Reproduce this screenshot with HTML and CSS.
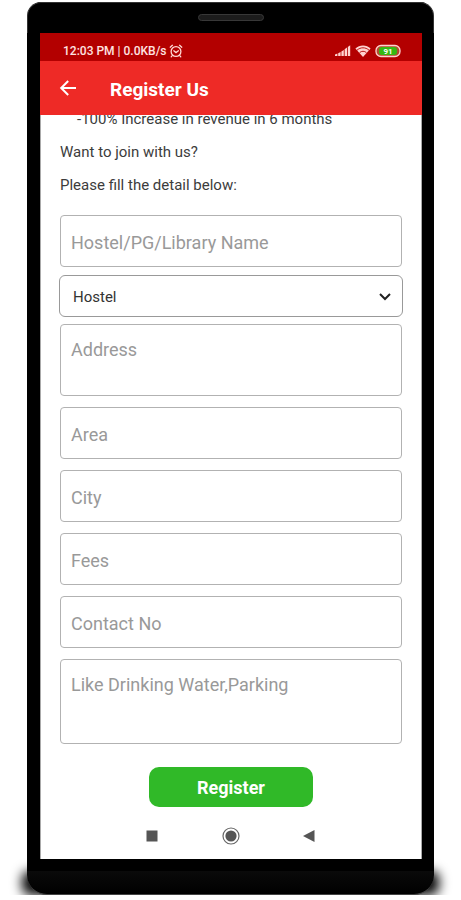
FILE: index.html
```html
<!DOCTYPE html>
<html lang="en">
<head>
  <meta charset="utf-8">
  <meta name="viewport" content="width=device-width, initial-scale=1">
  <title>Register Us</title>
  <link rel="stylesheet" href="styles.css">
</head>
<body>
  <div class="phone">
    <div class="bezel-top"><span class="speaker"></span></div>
    <div class="screen">
      <div class="status-bar">
        <span class="status-text">12:03 PM | 0.0KB/s</span>
        <svg class="alarm" width="14" height="14" viewBox="0 0 14 14" fill="none" stroke="#ffd9d4" stroke-width="1.3" stroke-linecap="round">
          <circle cx="7" cy="7.5" r="4.9"/>
          <path d="M1.2 3.2 3.4 1.3M12.8 3.2 10.6 1.3M4.8 6.8 7 8.6l2.4-1.8M3.2 11.6l-1 1.2M10.8 11.6l1 1.2"/>
        </svg>
        <div class="status-icons">
          <svg width="16" height="12" viewBox="0 0 16 12" fill="#ffd3d0">
            <path d="M0 9.5 2.4 8.6V11H0zM3.2 8.2 5.6 7v4H3.2zM6.4 6.4 8.8 5v6H6.4zM9.6 4.2 12 2.6V11H9.6zM12.8 2 15.2.3V11h-2.4z"/>
          </svg>
          <svg width="16" height="12" viewBox="0 0 16 12" fill="none">
            <path d="M.4 3.6C4.600-.6 11.400-.6 15.600 3.600L8 12z" fill="#ffd3d0"/>
            <path d="M2 5.200c3.500-3.200 8.500-3.200 12 0M4.600 7.600c2.200-1.800 4.600-1.800 6.800 0" stroke="#b30000" stroke-width=".9"/>
          </svg>
          <svg width="26" height="14" viewBox="0 0 26 14">
            <rect x="1" y="1.500" width="24" height="11" rx="5" fill="#b54a30" stroke="#ffd3d0" stroke-width="1.300"/>
            <rect x="4" y="3" width="18" height="8" rx="3" fill="#35b812"/>
            <text x="13" y="10" text-anchor="middle" class="battery-text">91</text>
          </svg>
        </div>
      </div>
      <header class="app-bar">
        <button class="back" type="button" aria-label="Back">
          <svg width="18" height="18" viewBox="0 0 18 18" fill="none" stroke="#fff" stroke-width="2">
            <path d="M17 9H2.500M9.200 2 2.200 9l7 7"/>
          </svg>
        </button>
        <h1>Register Us</h1>
      </header>
      <main class="content">
        <p class="benefit">-100% Increase in revenue in 6 months</p>
        <p>Want to join with us?</p>
        <p>Please fill the detail below:</p>
        <form class="form">
          <input class="field" type="text" aria-label="Hostel/PG/Library Name" placeholder="Hostel/PG/Library Name">
          <div class="select-wrap">
            <select class="select" aria-label="Type">
              <option>Hostel</option>
              <option>PG</option>
              <option>Library</option>
            </select>
            <svg class="chevron" width="12" height="8" viewBox="0 0 12 8" fill="none" stroke="#222" stroke-width="2">
              <path d="M1 1l5 5 5-5"/>
            </svg>
          </div>
          <textarea class="field area-address" aria-label="Address" placeholder="Address"></textarea>
          <input class="field" type="text" aria-label="Area" placeholder="Area">
          <input class="field" type="text" aria-label="City" placeholder="City">
          <input class="field" type="text" aria-label="Fees" placeholder="Fees">
          <input class="field" type="tel" aria-label="Contact No" placeholder="Contact No">
          <textarea class="field area-facilities" aria-label="Facilities" placeholder="Like Drinking Water,Parking"></textarea>
          <button class="submit" type="submit">Register</button>
        </form>
      </main>
      <nav class="nav-bar">
        <button type="button" aria-label="Recent apps">
          <svg width="18" height="18" viewBox="0 0 18 18"><rect x="3.500" y="3.500" width="11" height="11" fill="#555"/></svg>
        </button>
        <button type="button" aria-label="Home">
          <svg width="18" height="18" viewBox="0 0 18 18"><circle cx="9" cy="9" r="8" fill="none" stroke="#666" stroke-width="1.200"/><circle cx="9" cy="9" r="5.600" fill="#555"/></svg>
        </button>
        <button type="button" aria-label="Back">
          <svg width="18" height="18" viewBox="0 0 18 18"><path d="M2 9 13.500 3v12z" fill="#555"/></svg>
        </button>
      </nav>
    </div>
    <div class="bezel-bottom"></div>
  </div>
</body>
</html>
```

FILE: styles.css
```css
* {
  box-sizing: border-box;
}

body {
  margin: 0;
  background: #fff;
  color: #3c3c3c;
  font-family: Roboto, "Liberation Sans", sans-serif;
  overflow-x: hidden;
}

button {
  margin: 0;
  padding: 0;
  border: 0;
  background: none;
  font-family: inherit;
}

svg {
  display: block;
}

.phone {
  position: relative;
  margin: 0 27px;
}

/* Soft shadow beside the two lower corners */
.phone::before {
  content: "";
  position: absolute;
  z-index: -1;
  left: -5px;
  right: -5px;
  bottom: 0;
  height: 24px;
  border-radius: 8px;
  background: #000;
  filter: blur(6px);
  clip-path: inset(-20px -20px -1px -20px);
}

.phone::after {
  content: "";
  position: absolute;
  z-index: -1;
  top: 0;
  left: 10px;
  right: 9px;
  height: 12px;
  border-radius: 2px 2px 0 0;
  background: #4a4a4a;
}

.bezel-top {
  display: flex;
  justify-content: center;
  align-items: flex-start;
  height: 31px;
  margin-top: 2px;
  padding-top: 11px;
  border: 1px solid #333;
  border-bottom: 0;
  border-radius: 14px 14px 0 0;
  background: #000;
}

.speaker {
  width: 66px;
  height: 7px;
  border: 1px solid #383838;
  border-radius: 4px;
  background: #1c1c1c;
}

.screen {
  border: solid #000;
  border-width: 0 12px 0 13px;
  background: #fff;
  box-shadow: inset 1px 0 #aaa, inset -1px 0 #aaa;
}

.bezel-bottom {
  height: 36px;
  border-bottom: 1px solid #444;
  border-radius: 0 0 20px 20px;
  background: linear-gradient(#000 0 12px, #0a0a0a 12px, #000);
}

.status-bar {
  display: flex;
  align-items: center;
  height: 28px;
  padding: 7px 21px 0 23px;
  background: #b30000;
  color: #ffe3e0;
}

.status-text {
  font-size: 12px;
  font-weight: 500;
  white-space: nowrap;
}

.alarm {
  margin-left: 2px;
}

.status-icons {
  display: flex;
  align-items: center;
  gap: 4px;
  margin-left: auto;
}

.battery-text {
  fill: #fff;
  font-size: 8px;
  font-weight: 700;
}

.app-bar {
  display: flex;
  align-items: center;
  gap: 33px;
  height: 54px;
  padding: 0 19px;
  background: #ee2a26;
  color: #fff;
}

h1 {
  margin: 0;
  padding-top: 3px;
  font-size: 19px;
  font-weight: 700;
  line-height: 24px;
}

.content {
  overflow: hidden;
  padding: 0 20px;
}

p {
  margin: 0 0 13px;
  font-size: 15px;
  line-height: 20px;
}

.benefit {
  margin-top: -6px;
  padding-left: 17px;
}

.form {
  display: flex;
  flex-direction: column;
  gap: 11px;
  margin-top: 20px;
}

.field {
  width: 100%;
  height: 52px;
  margin: 0;
  padding: 2px 10px 0;
  border: 1px solid #b2b2b2;
  border-radius: 4px;
  outline: 0;
  background: #fff;
  color: #333;
  font-family: inherit;
  font-size: 18px;
  line-height: 20px;
  resize: none;
}

.field::placeholder {
  color: #999;
  opacity: 1;
}

.area-address {
  height: 72px;
  padding-top: 15px;
}

.area-facilities {
  height: 85px;
  padding-top: 15px;
}

.select-wrap {
  position: relative;
  margin: -3px -1px -4px;
}

.select {
  display: block;
  width: 100%;
  height: 42px;
  padding: 2px 36px 0 13px;
  border: 1px solid #999;
  border-radius: 6px;
  appearance: none;
  background: #fff;
  color: #333;
  font-family: inherit;
  font-size: 15px;
}

.chevron {
  position: absolute;
  top: 18px;
  right: 12px;
  pointer-events: none;
}

.submit {
  align-self: center;
  width: 164px;
  height: 40px;
  margin-top: 12px;
  border-radius: 10px;
  background: #30b928;
  color: #fff;
  font-size: 18px;
  font-weight: 700;
}

.nav-bar {
  display: flex;
  justify-content: center;
  gap: 61px;
  padding: 20px 0 14px;
}
```
